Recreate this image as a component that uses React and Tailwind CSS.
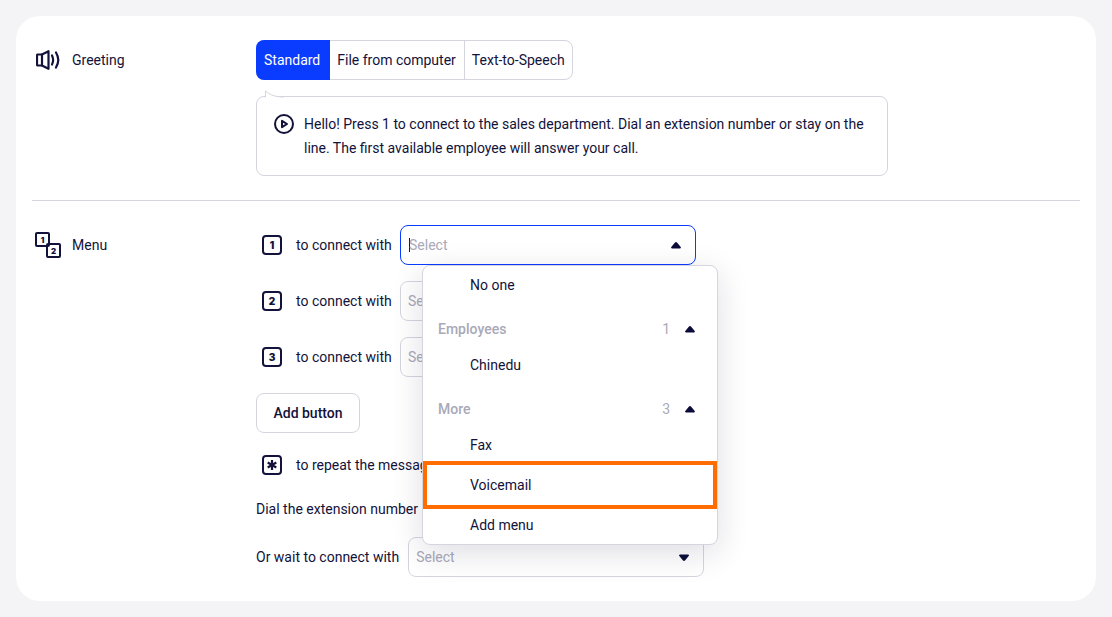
import { useState } from "react";

const Caret = ({ up = true, className = "" }) => (
  <svg width="10" height="7" viewBox="0 0 10 7" className={className}>
    {up ? (
      <path d="M3.800.7a1.600 1.600 0 0 1 2.400 0L9.700 5c.5.6.1 1.500-.7 1.500H1c-.8 0-1.200-.9-.7-1.500z" fill="#0c0c3a" />
    ) : (
      <path d="M3.800 6.300a1.600 1.600 0 0 0 2.400 0L9.700 2c.5-.6.1-1.500-.7-1.500H1C.2.5-.2 1.400.3 2z" fill="#0c0c3a" />
    )}
  </svg>
);

const SpeakerIcon = () => (
  <svg width="24" height="20" viewBox="0 0 24 20" fill="none" stroke="#12123a" strokeWidth="2.200">
    <path d="M6 4.500H1.800a.8.8 0 0 0-.8.8v9.400a.8.8 0 0 0 .8.8H6" />
    <path d="M6 4.500 12.500 1.200v17.600L6 15.500z" strokeLinejoin="round" />
    <path d="M16 5.500c1.400 2.800 1.400 6.200 0 9" strokeLinecap="round" />
    <path d="M20 2.500c2.800 4.600 2.800 10.400 0 15" strokeLinecap="round" />
  </svg>
);

const PlayIcon = () => (
  <svg width="20" height="20" viewBox="0 0 20 20" fill="none" stroke="#12123a" className="shrink-0">
    <circle cx="10" cy="10" r="9" strokeWidth="2" />
    <path d="M8 6.800v6.400l5-3.200z" strokeWidth="2" strokeLinejoin="round" />
  </svg>
);

const Key = ({ children }) => (
  <div className="w-5 h-5 shrink-0 flex items-center justify-center border-2 border-[#12123a] rounded-[4px] font-['Inter',sans-serif] text-[10px] leading-none font-black text-[#12123a]">
    {children}
  </div>
);

const AsteriskIcon = () => (
  <svg width="10" height="10" viewBox="0 0 10 10" stroke="#12123a" strokeWidth="2.200">
    <path d="M5 0v10M.7 2.500l8.600 5M.7 7.500l8.600-5" />
  </svg>
);

const MenuIcon = () => (
  <div className="w-[26px] h-[26px] relative shrink-0 font-['Inter',sans-serif]">
    <div className="absolute left-0 top-0 w-[15px] h-[15px] flex items-center justify-center border-2 border-[#12123a] rounded-[2px] text-[8px] leading-none font-black text-[#12123a]">
      1
    </div>
    <div className="absolute left-[11px] top-[11px] w-[15px] h-[15px] flex items-center justify-center border-2 border-[#12123a] rounded-[2px] text-[8px] leading-none font-black text-[#12123a]">
      2
    </div>
  </div>
);

const Select = ({ focused, up = false, children }) => (
  <div className="relative w-[296px]">
    <div
      className={`h-10 flex items-center justify-between pl-[7px] pr-[14px] rounded-lg border bg-white ${
        focused ? "border-[#0a3cff]" : "border-[#d5d5e0]"
      }`}
    >
      <span className="text-[#a9a9b8] flex items-center">
        {focused && <span className="w-px h-[14px] bg-[#12123a] ml-px -mr-px" />}
        Select
      </span>
      <Caret up={up} />
    </div>
    {children}
  </div>
);

const Option = ({ children }) => (
  <div className="h-10 flex items-center pl-[47px]">{children}</div>
);

const GroupHeader = ({ name, count }) => (
  <div className="h-8 mt-2 flex items-center pl-[15px] pr-[22px] text-[#a9a9b8]">
    <span className="font-medium flex-1">{name}</span>
    <span className="mr-[15px]">{count}</span>
    <Caret />
  </div>
);

const Dropdown = () => (
  <div className="absolute z-10 left-[22px] top-10 w-[296px] h-[280px] bg-white border border-[#d5d5e0] rounded-lg shadow-[0_8px_32px_rgba(18,18,58,0.14)]">
    <div className="-mt-px">
      <Option>No one</Option>
      <GroupHeader name="Employees" count="1" />
      <Option>Chinedu</Option>
      <GroupHeader name="More" count="3" />
      <Option>Fax</Option>
      <div className="relative">
        <Option>Voicemail</Option>
        <div className="absolute inset-x-0 -inset-y-1 border-4 border-[#ff6d00]" />
      </div>
      <Option>Add menu</Option>
    </div>
  </div>
);

const ConnectRow = ({ n, children }) => (
  <div className="flex items-center h-10">
    <div className="pl-[6px]">
      <Key>{n}</Key>
    </div>
    <span className="ml-[14px] mr-2 w-[96px] whitespace-nowrap">to connect with</span>
    {children}
  </div>
);

export default function App() {
  const [tab] = useState("Standard");

  return (
    <div className="min-h-screen bg-[#f4f4f6] p-4 text-[14px] text-[#12123a] font-['Roboto',sans-serif]">
      <div className="bg-white rounded-3xl px-4 pt-6 pb-6">
        <section className="flex pb-6 border-b border-[#d5d5e0]">
          <div className="w-[224px] pl-1 h-10 flex items-center gap-3">
            <SpeakerIcon />
            <span>Greeting</span>
          </div>
          <div>
            <div className="inline-flex h-10 border border-[#d5d5e0] rounded-lg">
              <div
                className={`flex items-center -my-px -ml-px pl-2 pr-[10px] rounded-l-lg ${
                  tab === "Standard" ? "bg-[#0a3cff] text-white" : ""
                }`}
              >
                Standard
              </div>
              <div className="flex items-center pl-[7px] pr-2">File from computer</div>
              <div className="flex items-center pl-[7px] pr-[7px] border-l border-[#d5d5e0]">Text-to-Speech</div>
            </div>
            <div className="relative mt-4 w-[632px] h-20 flex gap-[10px] px-4 pl-[17px] pt-[15px] border border-[#d5d5e0] rounded-lg leading-6">
              <svg width="20" height="8" viewBox="0 0 20 8" fill="none" className="absolute left-2 -top-[7px]">
                <path d="M0.500 7.500V0.700C3 3.500 8 7 19 7" fill="#fff" stroke="#d5d5e0" />
              </svg>
              <div className="pt-[2px]">
                <PlayIcon />
              </div>
              <p>
                Hello! Press 1 to connect to the sales department. Dial an extension number or stay on the line. The
                first available employee will answer your call.
              </p>
            </div>
          </div>
        </section>

        <section className="flex pt-6">
          <div className="w-[224px] pl-[3px] h-10 flex items-center gap-[11px]">
            <MenuIcon />
            <span>Menu</span>
          </div>
          <div className="flex flex-col items-start">
            <div className="flex flex-col gap-4">
              <ConnectRow n="1">
                <Select focused up>
                  <Dropdown />
                </Select>
              </ConnectRow>
              <ConnectRow n="2">
                <Select />
              </ConnectRow>
              <ConnectRow n="3">
                <Select />
              </ConnectRow>
            </div>
            <button className="mt-4 h-10 w-[104px] border border-[#d5d5e0] rounded-lg font-medium">Add button</button>
            <div className="mt-3 h-10 flex items-center">
              <div className="pl-[6px]">
                <Key>
                  <AsteriskIcon />
                </Key>
              </div>
              <span className="ml-[14px]">to repeat the message</span>
            </div>
            <div className="mt-1 h-10 flex items-center">Dial the extension number</div>
            <div className="mt-2 flex items-center gap-[9px]">
              <span>Or wait to connect with</span>
              <Select />
            </div>
          </div>
        </section>
      </div>
    </div>
  );
}
